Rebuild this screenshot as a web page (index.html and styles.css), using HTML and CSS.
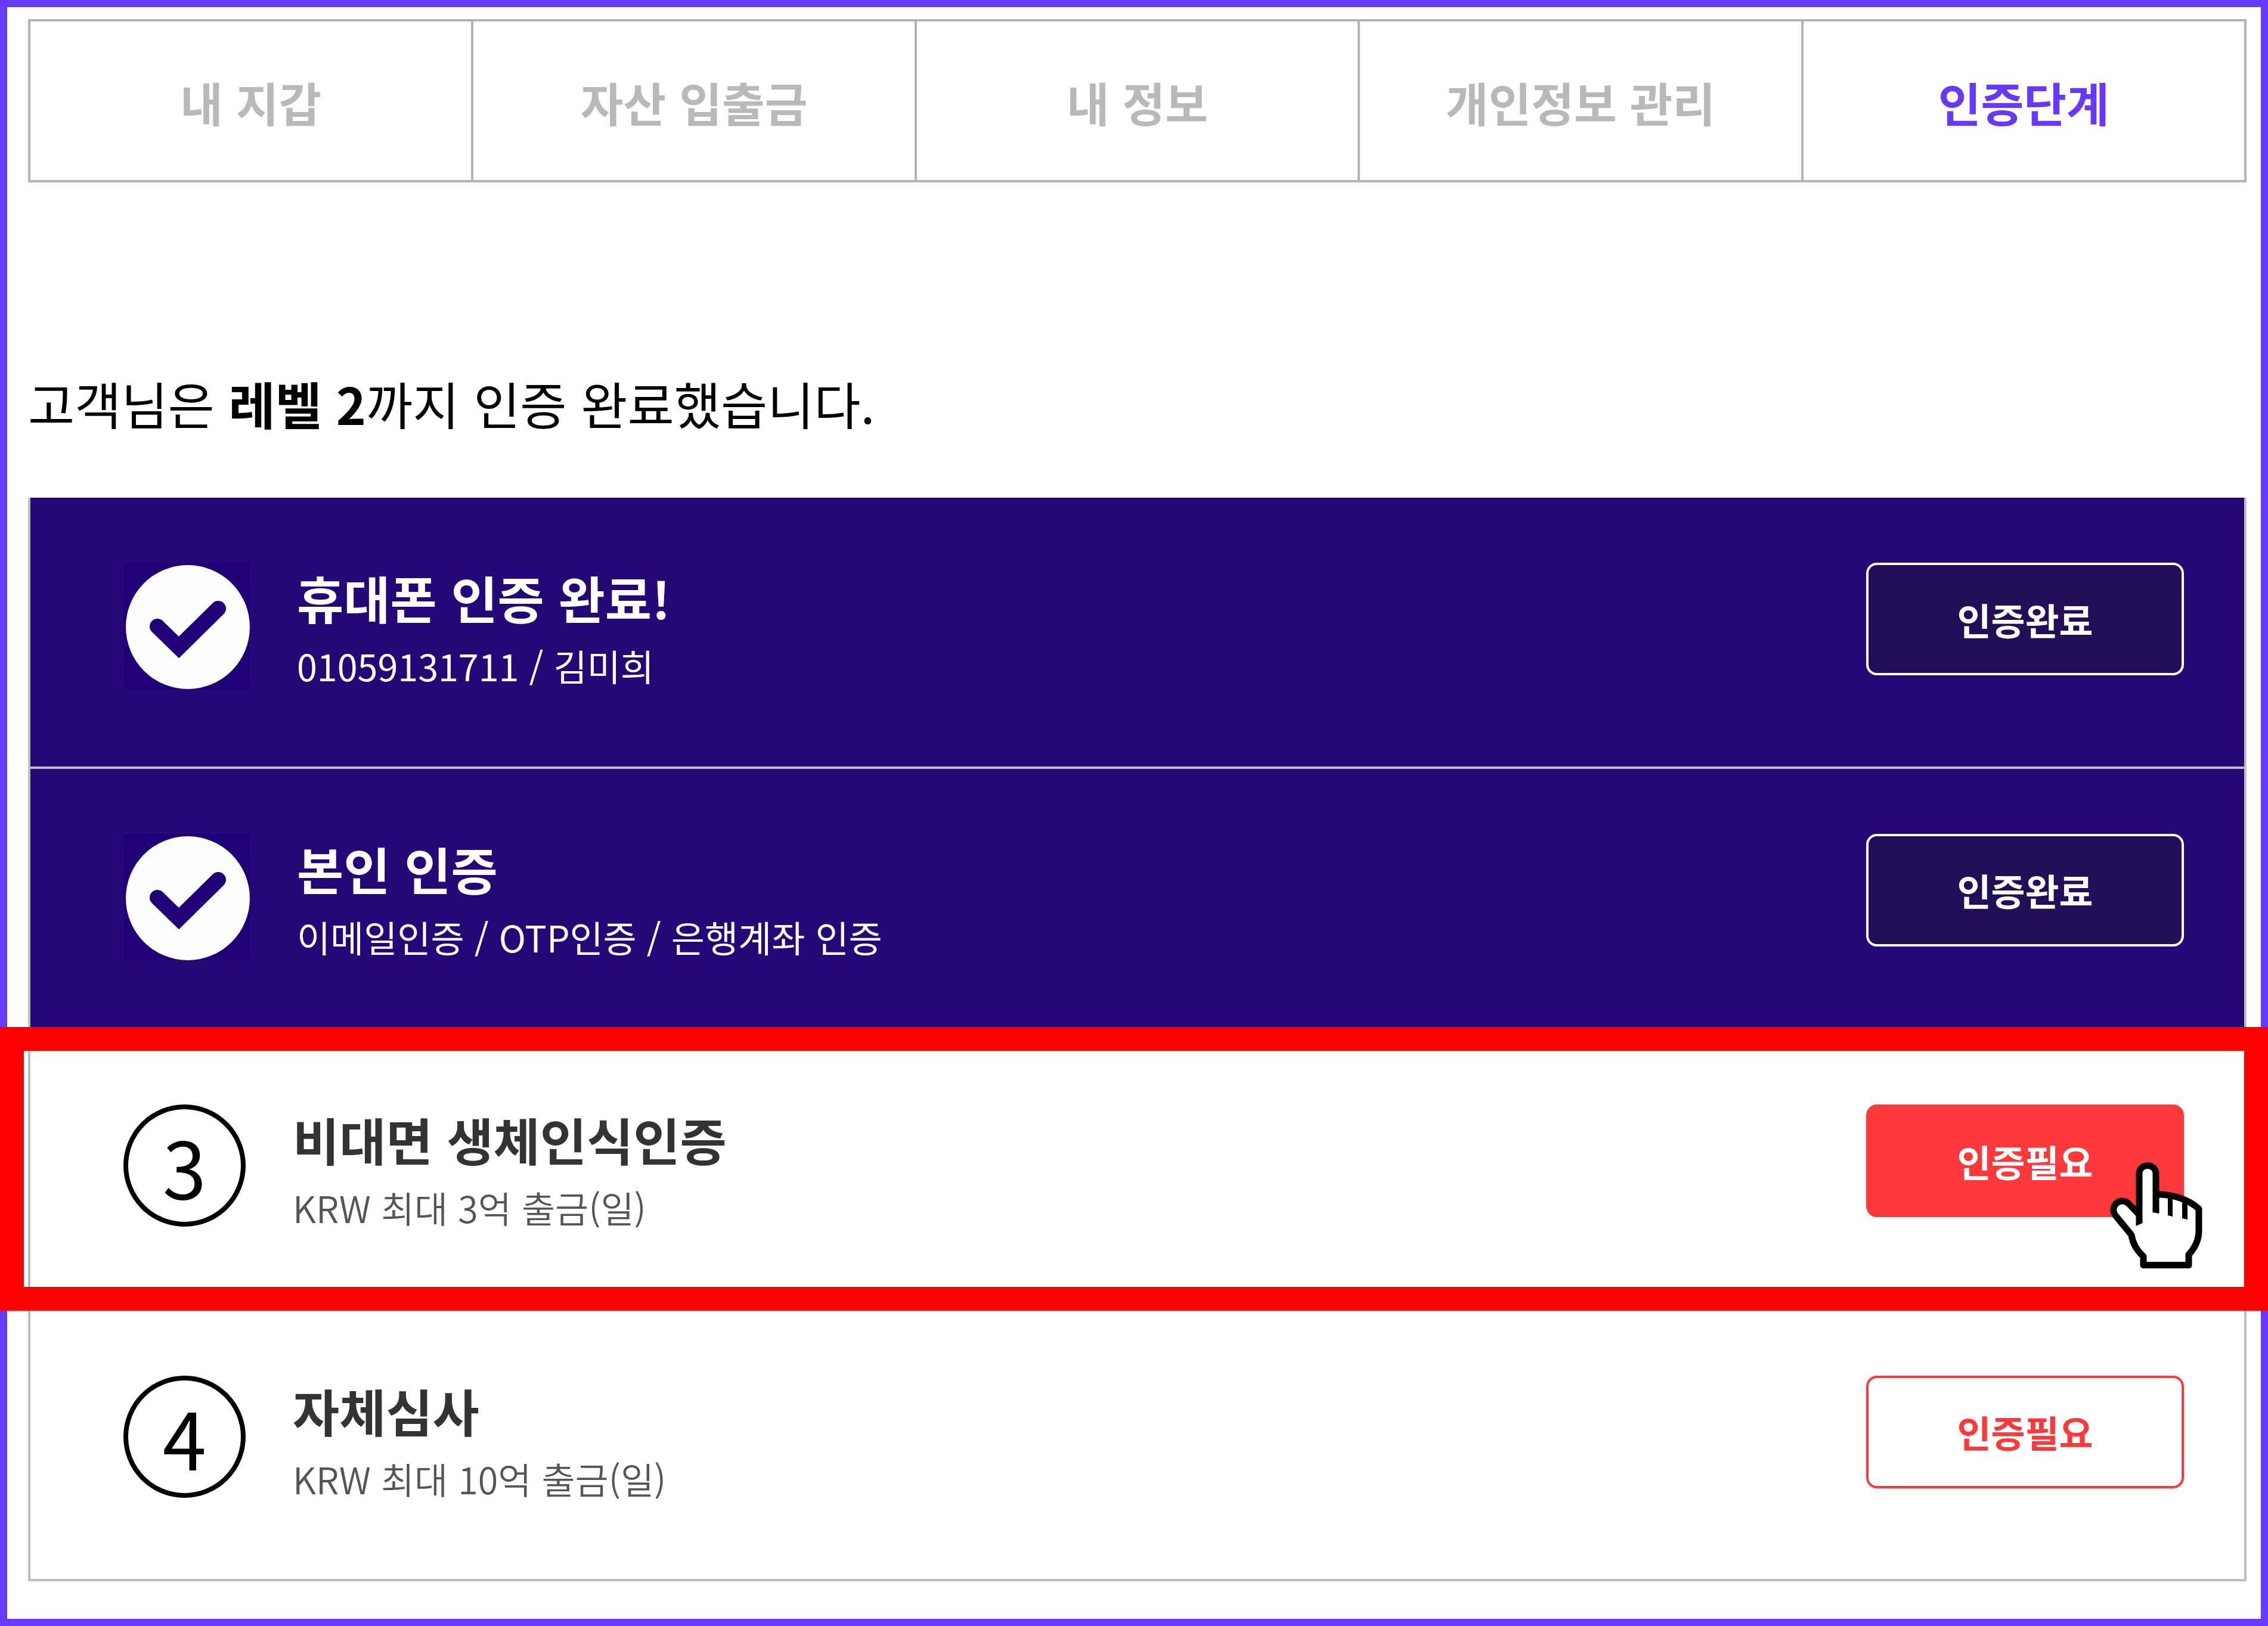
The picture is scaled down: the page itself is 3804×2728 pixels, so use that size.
FILE: index.html
```
<!DOCTYPE html>
<html lang="ko">
<head>
<meta charset="utf-8">
<meta name="viewport" content="width=device-width, initial-scale=1">
<title>인증단계</title>
<link rel="stylesheet" href="styles.css">
</head>
<body>
<div class="frame">
  <nav class="tabs">
    <a class="tab" href="#wallet">내 지갑</a>
    <a class="tab" href="#transfer">자산 입출금</a>
    <a class="tab" href="#info">내 정보</a>
    <a class="tab" href="#privacy">개인정보 관리</a>
    <a class="tab tab-active" href="#level" aria-current="page">인증단계</a>
  </nav>
  <main class="content">
    <h1 class="summary">고객님은 <strong>레벨 2</strong>까지 인증 완료했습니다.</h1>
    <ol class="levels">
      <li class="level level-done">
        <svg class="check" viewBox="0 0 212 212" aria-hidden="true">
          <rect width="212" height="212" fill="#1f0078"/>
          <circle cx="108" cy="108" r="104" fill="#fcfcfc"/>
          <path d="M57 107L93 142L159 77" fill="none" stroke="#1f0078" stroke-width="26" stroke-linecap="round"/>
        </svg>
        <div class="level-text">
          <h2 class="level-title">휴대폰 인증 완료!</h2>
          <p class="level-note">01059131711 / 김미희</p>
        </div>
        <button class="action action-done" type="button">인증완료</button>
      </li>
      <li class="level level-done">
        <svg class="check" viewBox="0 0 212 212" aria-hidden="true">
          <rect width="212" height="212" fill="#1f0078"/>
          <circle cx="108" cy="108" r="104" fill="#fcfcfc"/>
          <path d="M57 107L93 142L159 77" fill="none" stroke="#1f0078" stroke-width="26" stroke-linecap="round"/>
        </svg>
        <div class="level-text">
          <h2 class="level-title">본인 인증</h2>
          <p class="level-note">이메일인증 / OTP인증 / 은행계좌 인증</p>
        </div>
        <button class="action action-done" type="button">인증완료</button>
      </li>
      <li class="level level-current">
        <span class="number">3</span>
        <div class="level-text">
          <h2 class="level-title">비대면 생체인식인증</h2>
          <p class="level-note">KRW 최대 3억 출금(일)</p>
        </div>
        <button class="action action-primary" type="button">인증필요</button>
        <svg class="pointer" viewBox="0 0 160 182" aria-hidden="true">
          <path d="M51 100V21C51 3 79 3 79 21V55C112 56 134 65 151 80V117C151 132 144 146 134 157V174H58V160C46 149 40 138 38 124L11 91C0 76 20 57 35 73L51 90Z" fill="#fff"/>
          <path d="M51 99V21C51 3 79 3 79 21V82M79 55.500C112 56 134 65 151 80V117C151 132 144 146 134 157V174.500H58V160C46 149 40 138 38 124L11 91C0 76 20 57 35 73L51 90" fill="none" stroke="#000" stroke-width="11" stroke-linejoin="round"/>
          <path d="M45.500 98V109L56.500 104V98ZM73.500 80V86L84.500 88V80ZM99 58V91L107 93V58ZM123 62V96L132 98V62Z" fill="#000"/>
        </svg>
      </li>
      <li class="level">
        <span class="number">4</span>
        <div class="level-text">
          <h2 class="level-title">자체심사</h2>
          <p class="level-note">KRW 최대 10억 출금(일)</p>
        </div>
        <button class="action action-outline" type="button">인증필요</button>
      </li>
    </ol>
  </main>
</div>
</body>
</html>
```
FILE: styles.css
```
* {
  box-sizing: border-box;
}

body {
  margin: 0;
  background: #fff;
  color: #000;
  font-family: "Noto Sans CJK KR", sans-serif;
}

h1, h2, p, ol {
  margin: 0;
  padding: 0;
  font-weight: 400;
}

.frame {
  display: flex;
  flex-direction: column;
  min-height: 100vh;
  padding: 20px 24px 63px 35px;
  border: 12px solid #6738ff;
}

.tabs {
  display: flex;
  border: 4px solid #b4b4b4;
}

.tab {
  flex: 1;
  padding: 75px 0 71px;
  border-right: 4px solid #b4b4b4;
  color: #b9b9b9;
  font-size: 78px;
  font-weight: 700;
  line-height: 120px;
  text-align: center;
  text-decoration: none;
}

.tab:last-child {
  border-right: 0;
}

.tab-active {
  color: #6738ff;
}

.content {
  display: flex;
  flex: 1;
  flex-direction: column;
  padding-top: 308px;
}

.summary {
  margin-bottom: 97px;
  font-size: 85px;
  line-height: 124px;
}

.summary strong {
  font-weight: 700;
}

.levels {
  display: flex;
  flex: 1;
  flex-direction: column;
  border: solid #bebebe;
  border-width: 0 4px;
  list-style: none;
}

.level {
  position: relative;
  display: flex;
  flex: 1 0 auto;
  align-items: flex-start;
  padding: 109px 101px 109px 156px;
  border-bottom: 4px solid #bebebe;
}

.level-done {
  background: #240878;
  color: #fff;
}

.check {
  flex: none;
  width: 212px;
  height: 212px;
}

.number {
  flex: none;
  width: 205px;
  height: 205px;
  border: 8px solid #000;
  border-radius: 50%;
  font-size: 132px;
  line-height: 188px;
  text-align: center;
}

.level-text {
  flex: 1;
  margin-left: 79px;
}

.level-title {
  color: #333;
  font-size: 85px;
  font-weight: 700;
  line-height: 116px;
}

.level-note {
  color: #555;
  font-size: 61px;
  font-weight: 350;
  line-height: 114px;
}

.level-done .level-title,
.level-done .level-note {
  color: #fff;
}

.level-done .level-note {
  font-weight: 400;
}

.action {
  flex: none;
  width: 533px;
  height: 189px;
  padding: 0;
  border: 4px solid;
  border-radius: 18px;
  font-family: inherit;
  font-size: 62px;
  font-weight: 700;
}

.action-done {
  background: #220f58;
  border-color: #fff;
  color: #fff;
}

.action-primary {
  background: #ff3939;
  border-color: #ff3939;
  color: #fff;
}

.action-outline {
  background: #fff;
  border-color: #ff3939;
  color: #ff3939;
}

/* Highlight frame that reaches the page edges around the current step */
.level-current::after {
  content: "";
  position: absolute;
  top: -21px;
  right: -40px;
  bottom: -4px;
  left: -51px;
  z-index: 1;
  border: 40px solid #fc0000;
  pointer-events: none;
}

.pointer {
  position: absolute;
  top: 204px;
  right: 67px;
  z-index: 2;
  width: 160px;
  height: 182px;
}
```
